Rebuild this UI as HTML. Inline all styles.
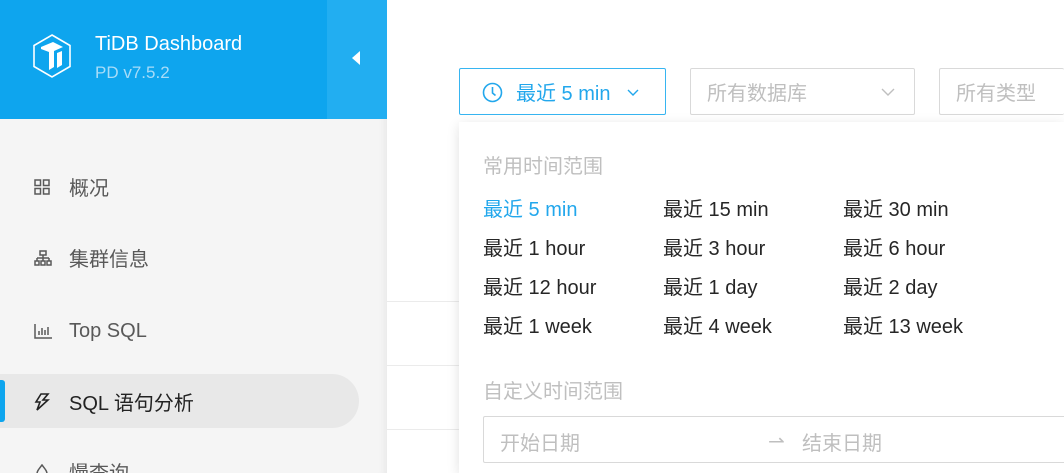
<!DOCTYPE html>
<html style="overflow:hidden;width:1064px;height:473px"><head><meta charset="utf-8"><style>
*{margin:0;padding:0;box-sizing:border-box}
body{width:1064px;height:473px;overflow:hidden;position:relative;background:#fff;font-family:"Liberation Sans","Noto Sans CJK SC",sans-serif}
.side{position:absolute;left:0;top:0;width:387px;height:473px;overflow:hidden;background:#f5f5f5;box-shadow:inset -8px 0 8px -6px rgba(0,0,0,.06)}
.hdr{position:absolute;left:0;top:0;width:387px;height:119px;background:#0ea5ee}
.col{position:absolute;left:327px;top:0;width:60px;height:119px;background:#22aef1}
.t1{position:absolute;left:95px;top:33px;color:#fff;font-size:20px}
.t2{position:absolute;left:95px;top:63px;color:#a8dcf8;font-size:17px}
.mi{position:absolute;left:0;width:359px;height:54px;font-size:20px;color:#595959}
.mi span{position:absolute;left:69px;top:14px}
.mi svg{position:absolute;left:34px;top:19px}
.sel{background:#e8e8e8;border-radius:0 27px 27px 0;color:#222}
.bar{position:absolute;left:0;top:6px;width:5px;height:42px;background:#0ea5ee;border-radius:0 3px 3px 0}
.btn{position:absolute;top:68px;height:47px;border:1px solid #d9d9d9;border-radius:2px;font-size:20px;color:#bfbfbf;overflow:hidden}
.wrap{position:absolute;left:0;top:0;width:1064px;height:473px;overflow:hidden}
.dd{position:absolute;left:459px;top:122px;width:605px;height:351px;background:#fff;box-shadow:0 3px 12px rgba(0,0,0,.12)}
.h{position:absolute;left:24px;font-size:20px;color:#bfbfbf}
.it{position:absolute;font-size:20px;color:#262626}
.line{position:absolute;left:387px;width:72px;height:1px;background:#ebebeb}
</style></head><body><div class="wrap">
<div class="line" style="top:301px"></div>
<div class="line" style="top:365px"></div>
<div class="line" style="top:429px"></div>
<div class="side">
 <div class="mi" style="top:160px"><svg width="16" height="16" viewBox="0 0 16 16" fill="none" stroke="#595959" stroke-width="1.5"><rect x="1" y="1" width="5.5" height="5.5"/><rect x="9.5" y="1" width="5.5" height="5.5"/><rect x="1" y="9.5" width="5.5" height="5.5"/><rect x="9.5" y="9.5" width="5.5" height="5.5"/></svg><span style="top:12px">概况</span></div>
 <div class="mi" style="top:231px"><svg width="18" height="16" viewBox="0 0 18 16" fill="none" stroke="#595959" stroke-width="1.5"><rect x="6" y="1" width="6" height="4"/><path d="M9 5v3M3 8h12M3 8v3M9 8v3M15 8v3"/><rect x="1" y="11" width="4" height="4"/><rect x="7" y="11" width="4" height="4"/><rect x="13" y="11" width="4" height="4"/></svg><span style="top:12px">集群信息</span></div>
 <div class="mi" style="top:304px"><svg width="18" height="16" viewBox="0 0 18 16" fill="none" stroke="#595959" stroke-width="1.5"><path d="M1 1v14h17M5 12V8M8 12V5M11 12V7M14 12V4"/></svg><span style="top:16px">Top SQL</span></div>
 <div class="mi sel" style="top:374px"><div class="bar"></div><svg width="16" height="18" viewBox="0 0 16 18" fill="none" stroke="#222" stroke-width="1.6"><path d="M7 1h7L9 7h5L3 17l3-8H2z"/></svg><span style="top:13px">SQL 语句分析</span></div>
 <div class="mi" style="top:445px"><svg style="top:19px;left:36px" width="12" height="16" viewBox="0 0 12 16" fill="none" stroke="#595959" stroke-width="1.5"><path d="M6 1C3 5 1 7 1 10a5 5 0 0 0 10 0C11 7 9 5 6 1z"/></svg><span style="top:12px">慢查询</span></div>
</div>
<div class="hdr"><div class="col"></div>
 <svg style="position:absolute;left:31px;top:33px" width="42" height="46" viewBox="0 0 42 46"><polygon points="21,2 39,12.5 39,33.5 21,44 3,33.5 3,12.5" fill="none" stroke="#fff" stroke-width="1.6"/><path d="M10 14l12-5 10 5-9 4v16l-5 3V19l-8-3z" fill="#fff"/><path d="M26 20l5-2v14l-5 3z" fill="#fff"/></svg>
 <div class="t1">TiDB Dashboard</div><div class="t2">PD v7.5.2</div>
 <svg style="position:absolute;left:352px;top:51px" width="10" height="14"><path d="M8 0v14L0 7z" fill="#fff"/></svg>
</div>
<div class="btn" style="left:459px;width:207px;border-color:#37b5f1;color:#22a7ec"><svg style="position:absolute;left:22px;top:13px" width="21" height="21" viewBox="0 0 21 21" fill="none" stroke="#22a7ec" stroke-width="1.6"><circle cx="10.5" cy="10.5" r="9"/><path d="M10.5 5v6l3 2.5"/></svg><span style="position:absolute;left:56px;top:8px">最近 5 min</span><svg style="position:absolute;left:167px;top:20px" width="12" height="8"><path d="M1 1l5 5 5-5" fill="none" stroke="#22a7ec" stroke-width="1.4"/></svg></div>
<div class="btn" style="left:690px;width:225px"><span style="position:absolute;left:16px;top:8px">所有数据库</span><svg style="position:absolute;left:190px;top:19px" width="14" height="9"><path d="M1 1l6 6 6-6" fill="none" stroke="#bfbfbf" stroke-width="1.4"/></svg></div>
<div class="btn" style="left:939px;width:125px;border-right:none"><span style="position:absolute;left:16px;top:8px">所有类型</span></div>
<div class="dd">
 <div class="h" style="top:28px">常用时间范围</div>
 <div class="it" style="left:24px;top:71px;color:#22a7ec">最近 5 min</div>
 <div class="it" style="left:204px;top:71px">最近 15 min</div>
 <div class="it" style="left:384px;top:71px">最近 30 min</div>
 <div class="it" style="left:24px;top:110px">最近 1 hour</div>
 <div class="it" style="left:204px;top:110px">最近 3 hour</div>
 <div class="it" style="left:384px;top:110px">最近 6 hour</div>
 <div class="it" style="left:24px;top:149px">最近 12 hour</div>
 <div class="it" style="left:204px;top:149px">最近 1 day</div>
 <div class="it" style="left:384px;top:149px">最近 2 day</div>
 <div class="it" style="left:24px;top:188px">最近 1 week</div>
 <div class="it" style="left:204px;top:188px">最近 4 week</div>
 <div class="it" style="left:384px;top:188px">最近 13 week</div>
 <div class="h" style="top:253px">自定义时间范围</div>
 <div style="position:absolute;left:24px;top:294px;width:581px;height:47px;border:1px solid #d9d9d9;border-right:none;border-radius:2px 0 0 2px;font-size:20px;color:#bfbfbf"><span style="position:absolute;left:16px;top:10px">开始日期</span><span style="position:absolute;left:284px;top:12px">⇀</span><span style="position:absolute;left:318px;top:10px">结束日期</span></div>
</div>
</div></body></html>
